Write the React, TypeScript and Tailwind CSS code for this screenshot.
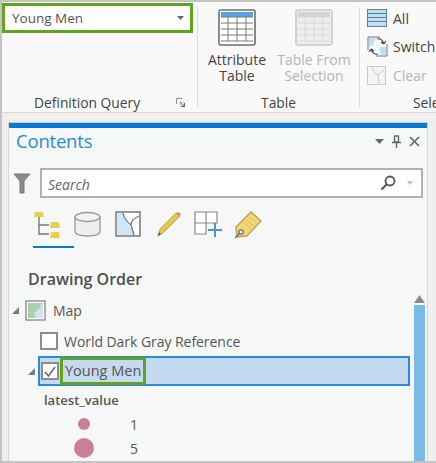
import React from "react";

const font = { fontFamily: '"Open Sans", "Noto Sans", sans-serif' };

function TableIcon({ faded }: { faded?: boolean }) {
  const frame = faded ? "#c9c9c9" : "#6f6f6f";
  const head = faded ? "#d2d2d2" : "#5ba3dc";
  const line = faded ? "#d8d8d8" : "#7d7d7d";
  return (
    <svg width="38" height="38" viewBox="0 0 38 38">
      <rect x="1" y="1" width="36" height="35" rx="1.5" fill={faded ? "#eeeeee" : "#fff"} stroke={frame} strokeWidth="1.6" />
      <rect x="3" y="3" width="32" height="5" fill={head} />
      {[8, 14, 20, 26, 32].map((y) => (
        <line key={y} x1="3" x2="35" y1={y} y2={y} stroke={line} />
      ))}
      {[10, 19, 28].map((x) => (
        <line key={x} x1={x} x2={x} y1="8" y2="32" stroke={line} />
      ))}
    </svg>
  );
}

function Tri({ className }: { className: string }) {
  return (
    <svg width="9" height="9" viewBox="0 0 9 9" className={className}>
      <path d="M8 1V8H1Z" fill="#7a7a7a" />
    </svg>
  );
}

export default function App() {
  return (
    <div style={font} className="w-[436px] h-[463px] overflow-hidden bg-[#efefef] border-t-2 border-l-2 border-b-2 border-[#c4c4c4] flex flex-col text-[#4c4c4c]">
      <div className="h-[111px] shrink-0 bg-[#f9f9f9] border-b border-[#e8d5c4] flex">
        <div className="w-[195px] shrink-0 flex flex-col">
          <div className="mt-[1px] w-[191px] h-[30px] border-[3px] border-[#62a420] bg-white flex items-center justify-between pl-[7px] pr-[6px]">
            <span className="text-[13.5px] text-[#555555]">Young Men</span>
            <svg width="7" height="4" viewBox="0 0 7 4"><path d="M0 0H7L3.5 4Z" fill="#666" /></svg>
          </div>
          <div className="mt-auto flex items-center h-[18px]">
            <span className="ml-[32px] text-[13.8px] leading-[18px] text-[#444]">Definition Query</span>
            <svg className="ml-[36px]" width="10" height="10" viewBox="0 0 10 10">
              <path d="M.5 6V.5H6" fill="none" stroke="#8a8a8a" />
              <path d="M3 3H9.5V9.5H3Z" fill="#e6e6e6" />
              <path d="M4 4L8.5 8.5M8.5 5V8.5H5" fill="none" stroke="#666" />
            </svg>
          </div>
        </div>
        <div className="w-[1px] my-[5px] bg-[#dcdcdc]" />
        <div className="w-[161px] shrink-0 flex flex-col items-center">
          <div className="flex mt-[7px] gap-[9px] pl-[2px]">
            <div className="w-[60px] flex flex-col items-center">
              <TableIcon />
              <div className="mt-[5px] text-[14px] leading-[16px] text-[#444] text-center">Attribute<br />Table</div>
            </div>
            <div className="w-[76px] flex flex-col items-center">
              <TableIcon faded />
              <div className="mt-[5px] text-[14px] leading-[16px] text-[#b5b5b5] text-center">Table From<br />Selection</div>
            </div>
          </div>
          <span className="mt-auto text-[13.8px] leading-[18px] text-[#444]">Table</span>
        </div>
        <div className="w-[1px] my-[5px] bg-[#dcdcdc]" />
        <div className="flex-1 min-w-0 overflow-hidden pl-[7px] flex flex-col whitespace-nowrap">
          <div className="h-[26px] mt-[3px] flex items-center gap-[6px] text-[14px] text-[#444]">
            <svg width="20" height="18" viewBox="0 0 20 18">
              <rect x=".5" y=".5" width="19" height="17" fill="#bfe0f2" stroke="#6b7f8c" />
              {[4.5, 8.5, 12.5].map((y) => <line key={y} x1="1" x2="19" y1={y} y2={y} stroke="#5c7f95" />)}
            </svg>
            All
          </div>
          <div className="h-[26px] mt-[2px] flex items-center gap-[5px] text-[14px] text-[#444]">
            <svg width="21" height="21" viewBox="0 0 21 21">
              <path d="M1 14V1H13M20 8V20H9" fill="none" stroke="#777" />
              <path d="M2 2H9L6 9 2 11Z" fill="#bfe0f2" />
              <path d="M12 11H19V19H14Z" fill="#bfe0f2" />
              <path d="M10 3C13 2 16 4 17 8M17 8L19 5M17 8L14 6M11 18C8 19 5 17 4 13M4 13L2 16M4 13L7 15" fill="none" stroke="#444" strokeWidth="1.2" />
            </svg>
            Switch
          </div>
          <div className="h-[26px] mt-[3px] flex items-center gap-[7px] text-[14px] text-[#b5b5b5]">
            <svg width="19" height="19" viewBox="0 0 19 19">
              <rect x=".5" y=".5" width="18" height="18" fill="#f4f4f4" stroke="#c9c9c9" strokeWidth="1" />
              <path d="M5 1C6 5 8 7 11 9L12 18M11 9L17 4" fill="none" stroke="#c9c9c9" />
            </svg>
            Clear
          </div>
          <span className="mt-auto ml-[46px] text-[13.8px] leading-[18px] text-[#444]">Selection</span>
        </div>
      </div>

      <div className="ml-[6px] mr-[8px] mt-[9px] flex-1 min-h-0 flex flex-col border-t border-[#cfcfcf] border-x border-x-[#d6d6d6] bg-[#f6f8f8] overflow-hidden">
        <div className="h-[5px] shrink-0 bg-[#0a78cf]" />
        <div className="h-[27px] shrink-0 flex items-center justify-between pl-[7px] pr-[7px]">
          <span className="text-[18.5px] leading-[26px] tracking-[-0.2px] text-[#2b8ad6] -translate-y-px">Contents</span>
          <div className="flex items-center gap-[8px]">
            <svg width="9" height="5" viewBox="0 0 9 5"><path d="M0 0H9L4.5 5Z" fill="#666" /></svg>
            <svg width="9" height="13" viewBox="0 0 9 13"><path d="M2 1H7M2.500 1V7H6.500V1M0 7.500H9M4.500 8V13" fill="none" stroke="#666" strokeWidth="1.4" /></svg>
            <svg width="11" height="11" viewBox="0 0 11 11"><path d="M1 1L10 10M10 1L1 10" stroke="#666" strokeWidth="1.6" /></svg>
          </div>
        </div>
        <div className="mt-[13px] shrink-0 flex items-center pl-[4px] pr-[4px]">
          <svg width="18" height="21" viewBox="0 0 18 21"><path d="M1 1H17L11 8V20H7V8Z" fill="#8a8a8a" stroke="#777" /></svg>
          <div className="ml-[9px] flex-1 h-[30px] border-2 border-[#b2b2b2] bg-white flex items-center pl-[6px] pr-[8px]">
            <span className="text-[14px] italic text-[#666] translate-y-px">Search</span>
            <svg className="ml-auto" width="16" height="16" viewBox="0 0 16 16">
              <circle cx="10" cy="6" r="4.500" fill="none" stroke="#555" strokeWidth="1.8" />
              <path d="M6.500 9.500L1.500 14.500" stroke="#555" strokeWidth="2.200" />
            </svg>
            <svg className="ml-[11px]" width="6" height="4" viewBox="0 0 6 4"><path d="M0 0H6L3 4Z" fill="#c0c0c0" /></svg>
          </div>
        </div>
        <div className="mt-[13px] h-[37px] shrink-0 flex items-start pl-[25px]">
          <div className="w-[40px] h-[37px] relative">
            <svg width="28" height="27" viewBox="0 0 28 27" className="ml-[-1px]">
              <path d="M6 5V23H16M6 14H16" fill="none" stroke="#777" strokeWidth="1.400" />
              <path d="M1 6L2 1H10L11 6Z M17 17L18 11H26L27 17Z M17 27L18 21H26L27 27Z" fill="#e8cf58" />
            </svg>
            <div className="absolute left-[-1px] right-0 bottom-0 h-[2px] bg-[#0a78cf]" />
          </div>
          <svg width="27" height="27" viewBox="0 0 27 27">
            <path d="M1 6V20C1 23 6 25 13.500 25S26 23 26 20V6Z" fill="#eeeeee" stroke="#999" strokeWidth="1.300" />
            <ellipse cx="13.500" cy="6" rx="12.500" ry="4.500" fill="#f3f3f3" stroke="#999" strokeWidth="1.300" />
          </svg>
          <svg className="ml-[14px]" width="26" height="26" viewBox="0 0 26 26">
            <rect x="1" y="1" width="24" height="24" fill="#fff" stroke="#777" strokeWidth="1.500" />
            <path d="M2 2H8C9 8 12 12 16 17L20 24H2Z" fill="#cfe6f6" />
            <path d="M8 2C9 8 12 11 16 14L19 24M16 14C16 9 20 7 24 5" fill="none" stroke="#777" strokeWidth="1.300" />
          </svg>
          <svg className="ml-[15px]" width="26" height="26" viewBox="0 0 26 26">
            <path d="M2 25L4 18 20 2 24 5 7 22Z" fill="#e5c94e" stroke="#a89a50" strokeWidth=".8" />
            <path d="M20 2L24 5 25 3 22 1Z" fill="#c98f7a" />
            <path d="M2 25L3 21 5 23Z" fill="#555" />
          </svg>
          <svg className="ml-[12px]" width="28" height="30" viewBox="0 0 28 30">
            <path d="M1 1H23V12H12V23H1ZM12 1V23M1 12H23" fill="#fff" stroke="#8a8a8a" strokeWidth="1.200" />
            <path d="M21 12V26M14 19H28" stroke="#4c95cf" strokeWidth="2" />
          </svg>
          <svg className="ml-[12px]" width="28" height="28" viewBox="0 0 28 28">
            <path d="M17 1L27 10 13 25 3 26 2 16Z" fill="#f2d77a" stroke="#c09a55" strokeWidth="1.300" />
            <path d="M12 9L20 15M10 12L18 18M15 6L23 12" stroke="#e0bd5e" strokeWidth="1" />
            <circle cx="7" cy="21" r="2.200" fill="#fff" stroke="#666" strokeWidth="1.200" />
            <path d="M6 22L1 27" stroke="#666" strokeWidth="1.200" />
          </svg>
        </div>
        <div className="flex-1 min-h-0 flex pr-[2px]">
          <div className="flex-1 min-w-0 flex flex-col">
            <div className="mt-[20px] ml-[19px] text-[16px] leading-[22px] font-semibold text-[#4f4f4f]">Drawing Order</div>
            <div className="mt-[9px] h-[24px] flex items-center pl-[2px]">
              <Tri className="" />
              <svg className="ml-[5px]" width="21" height="21" viewBox="0 0 21 21">
                <rect x="1" y="1" width="19" height="19" fill="#fff" stroke="#8c8c8c" strokeWidth="1.400" />
                <rect x="3" y="3" width="15" height="15" fill="#a9cfae" />
                <path d="M11 18L9 13 14 9 16 4H18V18Z" fill="#cfe4ee" />
              </svg>
              <span className="ml-[7px] text-[14px] text-[#555]">Map</span>
            </div>
            <div className="mt-[6px] h-[25px] flex items-center pl-[31px] whitespace-nowrap">
              <div className="w-[18px] h-[18px] border-2 border-[#8c8c8c] bg-white" />
              <span className="ml-[6px] text-[14px] tracking-[-0.05px] text-[#555]">World Dark Gray Reference</span>
            </div>
            <div className="mt-[3px] flex items-center pl-[18px]">
              <Tri className="mr-[1px] shrink-0" />
              <div className="flex-1 h-[30px] ml-[1px] border-2 border-[#2a8bd6] bg-[#c5daef] flex items-center pl-[1px] mr-[4px]">
                <div className="w-[18px] h-[18px] border-2 border-[#8c8c8c] bg-white flex items-center justify-center">
                  <svg width="12" height="11" viewBox="0 0 12 11"><path d="M1 6L4.500 10 11 1" fill="none" stroke="#666" strokeWidth="1.500" /></svg>
                </div>
                <div className="ml-[1px] h-[28px] px-[2px] border-[3px] border-[#62a420] flex items-center text-[14.5px] text-[#555]">Young Men</div>
              </div>
            </div>
            <div className="mt-[4px] ml-[35px] text-[13px] font-semibold leading-[20px] text-[#555]">latest_value</div>
            <div className="mt-[4px] flex items-center h-[20px]">
              <div className="w-[12px] h-[12px] ml-[69px] rounded-full bg-[#cc7f98]" />
              <span className="ml-[40px] text-[14px] text-[#555]">1</span>
            </div>
            <div className="mt-[1px] flex items-center h-[26px]">
              <div className="w-[20px] h-[20px] ml-[65px] rounded-full bg-[#cc7f98]" />
              <span className="ml-[36px] text-[14px] text-[#555]">5</span>
            </div>
          </div>
          <div className="w-[11px] shrink-0 flex flex-col mt-[47px]">
            <svg width="11" height="8" viewBox="0 0 11 8" className="mb-[2px]"><path d="M0 8H11L5.500 0Z" fill="#8a8a8a" /></svg>
            <div className="flex-1 bg-[#7bbbe8]" />
          </div>
        </div>
      </div>
    </div>
  );
}
